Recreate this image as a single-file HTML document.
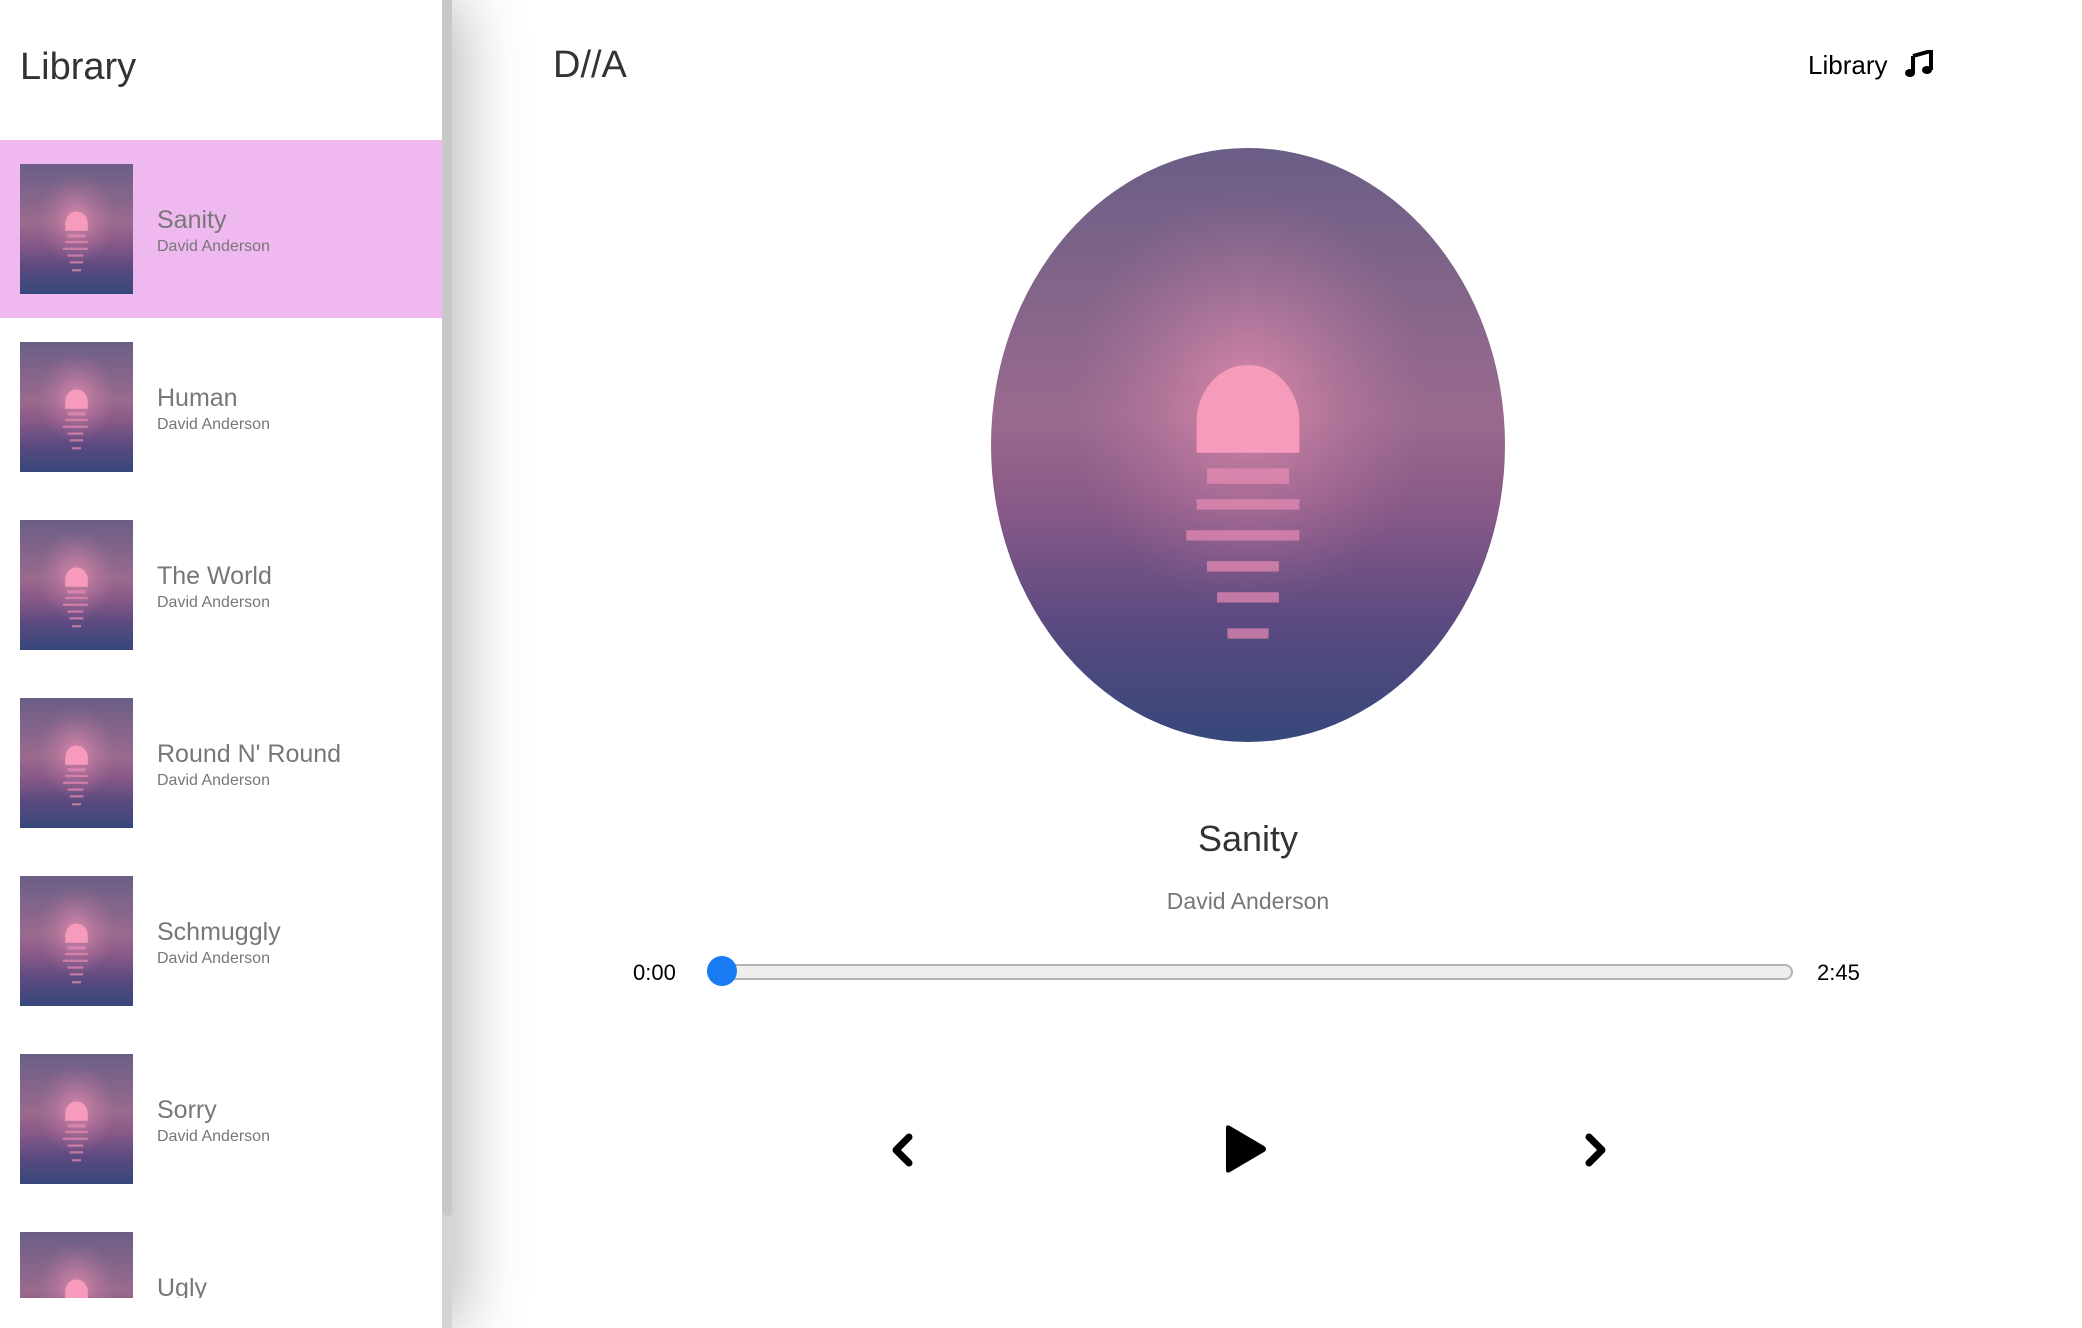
<!DOCTYPE html>
<html><head><meta charset="utf-8"><style>
*{margin:0;padding:0;box-sizing:border-box}
body{width:2082px;height:1328px;overflow:hidden;background:#fff;font-family:"Liberation Sans",sans-serif;position:relative}
#side{position:absolute;left:0;top:0;width:452px;height:1328px;background:#fff;box-shadow:10px 0 60px rgba(0,0,0,0.28);z-index:2}
#sb{position:absolute;left:442px;top:0;width:10px;height:1328px;background:#d4d4d4}
#sbt{position:absolute;left:442px;top:0;width:10px;height:1216px;background:#c8c8c8;border-radius:0 0 5px 5px}
#side h2{position:absolute;left:20px;top:46px;font-size:38px;font-weight:normal;color:#333}
#list{position:absolute;left:0;top:140px;width:442px;height:1158px;overflow:hidden}
.row{height:178px;position:relative}
.row.sel{background:#efb8ef}
.row svg{position:absolute;left:20px;top:24px;width:113px;height:130px}
.t{position:absolute;left:157px;top:66px;font-size:25px;color:#777}
.a{position:absolute;left:157px;top:98px;font-size:16px;color:#777}
.abs{position:absolute}
</style></head><body>
<svg width="0" height="0" style="position:absolute">
<defs>
<linearGradient id="sky" x1="0" y1="0" x2="0" y2="1">
<stop offset="0" stop-color="#6a5e86"/><stop offset="0.45" stop-color="#9a6a8e"/><stop offset="0.6" stop-color="#8a5a88"/><stop offset="0.8" stop-color="#5a4a80"/><stop offset="1" stop-color="#36477a"/></linearGradient>
<radialGradient id="glow" cx="0.5" cy="0.42" r="0.35"><stop offset="0" stop-color="#f596b8" stop-opacity="0.7"/><stop offset="1" stop-color="#c07aa0" stop-opacity="0"/></radialGradient>
<symbol id="art" viewBox="0 0 100 115" preserveAspectRatio="none">
<rect width="100" height="115" fill="url(#sky)"/>
<rect width="100" height="115" fill="url(#glow)"/>
<path d="M40 53 a10 11 0 0 1 20 0 v6 h-20z" fill="#f79bbd"/>
<g fill="#e98cb4" opacity="0.7"><rect x="42" y="62" width="16" height="3"/><rect x="40" y="68" width="20" height="2"/><rect x="38" y="74" width="22" height="2"/><rect x="42" y="80" width="14" height="2"/><rect x="44" y="86" width="12" height="2"/><rect x="46" y="93" width="8" height="2"/></g>
</symbol>
</defs></svg>
<div id="side">
<h2>Library</h2>
<div id="list">
<div class="row sel"><svg><use href="#art"/></svg><div class="t">Sanity</div><div class="a">David Anderson</div></div>
<div class="row"><svg><use href="#art"/></svg><div class="t">Human</div><div class="a">David Anderson</div></div>
<div class="row"><svg><use href="#art"/></svg><div class="t">The World</div><div class="a">David Anderson</div></div>
<div class="row"><svg><use href="#art"/></svg><div class="t">Round N' Round</div><div class="a">David Anderson</div></div>
<div class="row"><svg><use href="#art"/></svg><div class="t">Schmuggly</div><div class="a">David Anderson</div></div>
<div class="row"><svg><use href="#art"/></svg><div class="t">Sorry</div><div class="a">David Anderson</div></div>
<div class="row"><svg><use href="#art"/></svg><div class="t">Ugly</div><div class="a">David Anderson</div></div>
</div>
<div id="sb"></div><div id="sbt"></div>
</div>
<div class="abs" style="left:553px;top:44px;font-size:38px;color:#333">D//A</div>
<div class="abs" style="left:1808px;top:50px;font-size:26px;color:#000">Library</div>
<svg class="abs" style="left:1905px;top:50px" width="28" height="27" viewBox="0 0 28 27"><path d="M8 6 L26 1 V20" stroke="#000" stroke-width="4" fill="none"/><path d="M8 6 V23" stroke="#000" stroke-width="4"/><ellipse cx="5" cy="23" rx="5" ry="4" fill="#000"/><ellipse cx="22" cy="20" rx="5" ry="4" fill="#000"/></svg>
<svg class="abs" style="left:991px;top:148px" width="514" height="594" viewBox="0 0 100 115" preserveAspectRatio="none">
<clipPath id="c"><ellipse cx="50" cy="57.5" rx="50" ry="57.5"/></clipPath>
<g clip-path="url(#c)"><use href="#art" width="100" height="115"/></g></svg>
<div class="abs" style="left:0;width:2496px;top:818px;text-align:center;font-size:36px;color:#333">Sanity</div>
<div class="abs" style="left:0;width:2496px;top:888px;text-align:center;font-size:23px;color:#777">David Anderson</div>
<div class="abs" style="left:633px;top:960px;font-size:22px;color:#000">0:00</div>
<div class="abs" style="left:1817px;top:960px;font-size:22px;color:#000">2:45</div>
<div class="abs" style="left:707px;top:964px;width:1086px;height:16px;background:#efefef;border:2px solid #b3b3b3;border-radius:8px"></div>
<div class="abs" style="left:707px;top:956px;width:30px;height:30px;background:#1a7cf5;border-radius:50%"></div>
<svg class="abs" style="left:889px;top:1133px" width="26" height="34" viewBox="0 0 26 34"><path d="M20 4 L7 17 L20 30" stroke="#000" stroke-width="7" fill="none" stroke-linejoin="round" stroke-linecap="round"/></svg>
<svg class="abs" style="left:1222px;top:1124px" width="46" height="50" viewBox="0 0 46 50"><path d="M4 4 Q4 0 8 2 L42 22 Q46 25 42 28 L8 48 Q4 50 4 46Z" fill="#000"/></svg>
<svg class="abs" style="left:1583px;top:1133px" width="26" height="34" viewBox="0 0 26 34"><path d="M6 4 L19 17 L6 30" stroke="#000" stroke-width="7" fill="none" stroke-linejoin="round" stroke-linecap="round"/></svg>
</body></html>
